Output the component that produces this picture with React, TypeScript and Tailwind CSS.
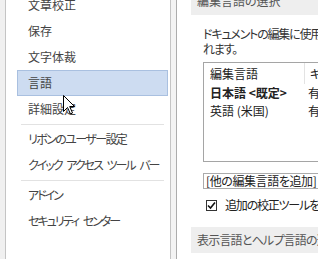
import React from 'react';

const font = { fontFamily: '"Noto Sans CJK JP", "Noto Sans", sans-serif' };

type Item = { label: string; tight?: string };

const groups: Item[][] = [
  [{ label: '文章校正' }, { label: '保存' }, { label: '文字体裁' }, { label: '言語' }, { label: '詳細設定' }],
  [
    { label: 'リボンのユーザー設定', tight: 'tracking-[-1.6px]' },
    { label: 'クイック アクセス ツール バー', tight: 'tracking-[-2px] [word-spacing:4px]' },
  ],
  [
    { label: 'アドイン', tight: 'tracking-[-2px]' },
    { label: 'セキュリティ センター', tight: 'tracking-[-2px] [word-spacing:4px]' },
  ],
];

const Cursor: React.FC = () => (
  <svg className="absolute left-[63px] top-[95px]" width="13" height="20" viewBox="0 0 13 20">
    <path
      d="M0.5 0.5 V16.5 L4.5 12.5 L7.5 19 L9.5 18 L6.7 11.5 H11.5 Z"
      fill="#ffffff"
      stroke="#000000"
      strokeWidth="1"
      strokeLinejoin="miter"
    />
  </svg>
);

const App: React.FC = () => {
  return (
    <div
      className="relative w-[318px] h-[259px] overflow-hidden flex bg-white text-[12px] [font-feature-settings:'palt']"
      style={font}
    >
      <div className="w-[5px] bg-[#f0f0f0]" />

      {/* category list */}
      <div className="w-[166px] shrink-0 border-x border-[#c4c4c4] bg-white">
        <div className="mt-[-8px] ml-[11px] mr-[2px] flex flex-col text-[#444444]">
          {groups.map((items, gi) => (
            <React.Fragment key={gi}>
              {gi > 0 && (
                <div className="h-[4px] flex items-center px-[4px]">
                  <div className="h-px w-full bg-[#e2e2e2]" />
                </div>
              )}
              {items.map(it => (
                <div
                  key={it.label}
                  className={`h-[26px] flex items-center pl-[10px] border whitespace-pre leading-none ${
                    it.tight ?? ''
                  } ${it.label === '言語' ? 'bg-[#cddcf1] border-[#a9c0e0]' : 'border-transparent'}`}
                >
                  {it.label}
                </div>
              ))}
            </React.Fragment>
          ))}
        </div>
      </div>

      <div className="w-[5px] shrink-0 bg-[#f3f3f3]" />

      {/* options pane */}
      <div className="flex-1 min-w-0 border-l border-[#acacac] pl-[14px] flex flex-col">
        <div className="mt-[-14px] h-[29px] shrink-0 bg-[#eeeeee] pl-[6px] flex items-center text-[#555555] whitespace-nowrap leading-none">
          編集言語の選択
        </div>

        <div className="mt-[11px] ml-[12px] leading-[15px] text-[#333333] whitespace-nowrap tracking-[-1.2px]">
          <div>ドキュメントの編集に使用する言語を追加します。編集言語によって、辞書、文法チェックなどの機能が設定さ</div>
          <div>れます。</div>
        </div>

        <div className="mt-[6px] ml-[12px] w-[200px] h-[100px] shrink-0 border border-[#a5a5a5] text-[#222222] whitespace-nowrap leading-none">
          <div className="h-[21px] flex">
            <div className="w-[101px] shrink-0 pl-[6px] flex items-center border-r border-[#e3e3e3]">編集言語</div>
            <div className="pl-[5px] flex items-center">キーボード レイアウト</div>
          </div>
          <div className="h-[18px] flex">
            <div className="w-[101px] shrink-0 pl-[6px] flex items-center font-bold">日本語 &lt;既定&gt;</div>
            <div className="pl-[3px] flex items-center">有効</div>
          </div>
          <div className="h-[18px] flex">
            <div className="w-[101px] shrink-0 pl-[6px] flex items-center">英語 (米国)</div>
            <div className="pl-[3px] flex items-center">有効</div>
          </div>
        </div>

        <div className="mt-[11px] ml-[12px] w-[160px] h-[16px] shrink-0 border border-[#ababab] pl-[2px] flex items-center text-[#222222] whitespace-nowrap leading-none tracking-[-0.4px]">
          [他の編集言語を追加]
        </div>

        <div className="mt-[8px] ml-[15px] h-[16px] shrink-0 flex items-center gap-[8px] text-[#222222] whitespace-nowrap leading-none">
          <div className="w-[11px] h-[11px] shrink-0 border border-[#333333] bg-white flex items-center justify-center">
            <svg width="9" height="9" viewBox="0 0 9 9">
              <path d="M1 4.5 L3.5 7 L8 1.5" fill="none" stroke="#111111" strokeWidth="1.6" />
            </svg>
          </div>
          <span className="tracking-[-1.2px]">追加の校正ツールをインストールする</span>
        </div>

        <div className="mt-[14px] h-[26px] shrink-0 bg-[#eeeeee] pl-[6px] flex items-center text-[#555555] whitespace-nowrap leading-none tracking-[-0.8px]">
          表示言語とヘルプ言語の選択
        </div>
      </div>

      <Cursor />
    </div>
  );
};

export default App;
